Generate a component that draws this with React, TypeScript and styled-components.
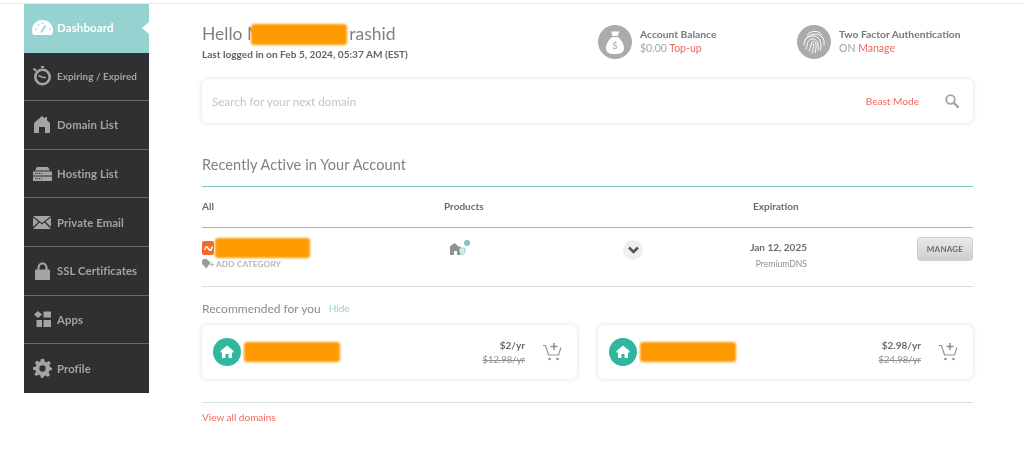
import * as React from "react";
import styled, { createGlobalStyle } from "styled-components";

const GlobalStyle = createGlobalStyle`
  html, body {
    margin: 0;
    padding: 0;
    background: #fff;
    font-family: "Lato", "Open Sans", sans-serif;
    color: #6f7072;
  }
`;

const Page = styled.div`
  width: 1024px;
  height: 451px;
  margin-top: 3px;
  box-sizing: border-box;
  overflow: hidden;
  border-top: 1px solid #ececec;
  display: flex;
  align-items: flex-start;
  padding-left: 24px;
  filter: blur(0.35px);
`;

const Sidebar = styled.nav`
  width: 125px;
  flex: none;
  display: flex;
  flex-direction: column;
`;

const NavItem = styled.div<{ $active?: boolean; $small?: boolean }>`
  height: 48.6px;
  box-sizing: border-box;
  display: flex;
  align-items: center;
  position: relative;
  background: ${(p) => (p.$active ? "#96d2cf" : "#2f3032")};
  border-bottom: 1px solid ${(p) => (p.$active ? "#96d2cf" : "#66686a")};
  color: ${(p) => (p.$active ? "#fff" : "#a3a4a5")};
  font-size: ${(p) => (p.$active ? "11.5px" : p.$small ? "9.8px" : "11.3px")};
  font-weight: 700;
  white-space: nowrap;
  letter-spacing: 0.1px;

  &:last-child {
    border-bottom: 0;
  }
`;

const NavIcon = styled.span`
  width: 33px;
  flex: none;
  display: flex;
  justify-content: center;
  padding-left: 3px;
  box-sizing: border-box;
`;

const NavNotch = styled.span`
  position: absolute;
  right: 0;
  top: 18px;
  width: 0;
  height: 0;
  border-top: 6px solid transparent;
  border-bottom: 6px solid transparent;
  border-right: 7px solid #fff;
`;

const Main = styled.main`
  width: 771px;
  margin-left: 53px;
  flex: none;
  display: flex;
  flex-direction: column;
`;

const TopRow = styled.header`
  height: 75px;
  display: flex;
  align-items: flex-start;
`;

const Greeting = styled.div`
  width: 396px;
  flex: none;
  padding-top: 19px;
`;

const Hello = styled.div`
  font-size: 17.5px;
  line-height: 22px;
  color: #808183;
  display: flex;
  align-items: center;
`;

const Redaction = styled.span<{ $w: number; $h: number }>`
  display: inline-block;
  flex: none;
  width: ${(p) => p.$w}px;
  height: ${(p) => p.$h}px;
  background: #ff9a00;
  border-radius: 3px;
  filter: blur(1px);
`;

const HelloMark = styled(Redaction)`
  margin: 0 2px 0 -12px;
`;

const DomainMark = styled(Redaction)`
  margin-left: 1px;
`;

const OfferMark = styled(Redaction)`
  margin-left: 3px;
`;

const LastLogged = styled.div`
  font-size: 10.1px;
  line-height: 12px;
  font-weight: 700;
  color: #636466;
  margin-top: 3px;
`;

const Stat = styled.div<{ $w: number }>`
  width: ${(p) => p.$w}px;
  flex: none;
  display: flex;
  align-items: center;
  gap: 8px;
  margin-top: 21px;
`;

const StatIcon = styled.span`
  width: 34px;
  height: 34px;
  flex: none;
  border-radius: 50%;
  background: #aaabad;
  display: flex;
  align-items: center;
  justify-content: center;
`;

const StatText = styled.div`
  padding-bottom: 2px;
`;

const StatTitle = styled.div`
  font-size: 10.3px;
  line-height: 14px;
  font-weight: 700;
  color: #77787a;
`;

const StatValue = styled.div`
  font-size: 10.5px;
  line-height: 14px;
  color: #a3a4a6;
`;

const Link = styled.span`
  color: #f0695c;
`;

const SearchCard = styled.div`
  height: 44px;
  box-sizing: border-box;
  border-radius: 6px;
  box-shadow: 0 0 5px rgba(0, 0, 0, 0.13);
  display: flex;
  align-items: center;
  padding: 0 14px 0 10px;
  font-size: 11.7px;
  color: #c2c3c5;
`;

const BeastMode = styled(Link)`
  margin-left: auto;
  margin-right: 26px;
  font-size: 10.1px;
`;

const SectionTitle = styled.h2`
  margin: 32px 0 0;
  font-size: 14.5px;
  line-height: 20px;
  font-weight: 400;
  color: #808183;
  letter-spacing: 0.1px;
`;

const TableHead = styled.div`
  margin-top: 11px;
  height: 42px;
  box-sizing: border-box;
  border-top: 1px solid #7fc5c1;
  border-bottom: 1px solid #7fc5c1;
  padding-bottom: 2px;
  display: flex;
  align-items: center;
  font-size: 10px;
  font-weight: 700;
  color: #6b6c6e;
`;

const HeadCell = styled.div<{ $w: number }>`
  width: ${(p) => p.$w}px;
  flex: none;
`;

const DomainRow = styled.div`
  height: 59px;
  box-sizing: border-box;
  border-bottom: 1px solid #dcdcdc;
  display: flex;
  align-items: flex-start;
`;

const DomainCell = styled.div`
  width: 242px;
  flex: none;
  padding-top: 10px;
`;

const DomainName = styled.div`
  display: flex;
  align-items: center;
  height: 20px;
`;

const Favicon = styled.span`
  width: 12px;
  height: 14px;
  flex: none;
  border-radius: 2px;
  background: #f26a2c;
  display: flex;
  align-items: center;
  justify-content: center;
`;

const AddCategory = styled.div`
  display: flex;
  align-items: center;
  gap: 2px;
  font-size: 8.3px;
  line-height: 12px;
  font-weight: 700;
  letter-spacing: 0.1px;
  color: #b4b5b6;
`;

const ProductCell = styled.div`
  width: 179px;
  box-sizing: border-box;
  flex: none;
  padding: 12px 0 0 5px;
`;

const Toggle = styled.span`
  width: 20px;
  height: 20px;
  flex: none;
  margin-top: 12px;
  border-radius: 50%;
  background: #efefef;
  display: flex;
  align-items: center;
  justify-content: center;
`;

const DateCell = styled.div`
  width: 164px;
  flex: none;
  text-align: right;
  padding-top: 12px;
`;

const DateText = styled.div`
  font-size: 10px;
  line-height: 14px;
  font-weight: 700;
  color: #6b6c6e;
`;

const PlanText = styled.div`
  font-size: 8.6px;
  line-height: 12px;
  margin-top: 4px;
  color: #8e8f91;
`;

const ManageButton = styled.button`
  margin: 9px 0 0 auto;
  width: 56px;
  height: 24px;
  padding: 0;
  border: 1px solid #d0d0d0;
  border-radius: 3px;
  background: linear-gradient(#e9e9e9, #cfcfcf);
  font-family: inherit;
  font-size: 8px;
  font-weight: 700;
  letter-spacing: 0.2px;
  color: #6b6c6e;
`;

const RecommendHead = styled.div`
  margin-top: 13px;
  height: 16px;
  display: flex;
  align-items: center;
  gap: 8px;
  font-size: 12px;
  color: #8a8b8d;
`;

const HideLink = styled.span`
  font-size: 10px;
  color: #96d2cf;
`;

const CardGrid = styled.div`
  margin-top: 9px;
  display: grid;
  grid-template-columns: 375px 375px;
  justify-content: space-between;
`;

const OfferCard = styled.div`
  height: 54px;
  box-sizing: border-box;
  border-radius: 6px;
  box-shadow: 0 0 5px rgba(0, 0, 0, 0.13);
  display: flex;
  align-items: center;
  padding: 0 15px 0 11px;
`;

const HomeBadge = styled.span`
  width: 28px;
  height: 28px;
  flex: none;
  border-radius: 50%;
  background: #30b79e;
  display: flex;
  align-items: center;
  justify-content: center;
`;

const Price = styled.div`
  margin-left: auto;
  margin-right: 18px;
  text-align: right;
`;

const NewPrice = styled.div`
  font-size: 10px;
  line-height: 14px;
  font-weight: 700;
  color: #6b6c6e;
`;

const OldPrice = styled.div`
  font-size: 9.5px;
  line-height: 14px;
  margin-top: 1px;
  color: #8e8f91;
  text-decoration: line-through;
`;

const Divider = styled.hr`
  margin: 23px 0 0;
  border: 0;
  border-top: 1px solid #dcdcdc;
`;

const ViewAll = styled(Link)`
  margin-top: 8px;
  font-size: 10px;
  line-height: 12px;
`;

const GaugeIcon = () => (
  <svg width="21" height="15" viewBox="0 0 21 15">
    <path fill="#fff" d="M10.5 0C4.7 0 0 4.6 0 10.4 0 12 .4 13.5 1.1 15h18.8c.7-1.5 1.1-3 1.1-4.6C21 4.6 16.3 0 10.5 0z" />
    <path fill="none" stroke="#96d2cf" strokeWidth="1.5" d="M9 12.5 13.5 5.5M3 9.5h1.5M17 9.5h1.5M6 4.5l1 1M10.5 2.5V4" />
  </svg>
);

const TimerIcon = () => (
  <svg width="20" height="20" viewBox="0 0 20 20">
    <path fill="none" stroke="#a3a4a5" strokeWidth="2.2" d="M1.5 2.5l3 2.5M9 1h3" />
    <circle cx="10.5" cy="11" r="7.2" fill="none" stroke="#a3a4a5" strokeWidth="2.6" />
    <path fill="none" stroke="#a3a4a5" strokeWidth="1.5" d="M6.5 9.5l4.5 2h3" />
  </svg>
);

const HouseIcon = () => (
  <svg width="16" height="17" viewBox="0 0 16 17">
    <path fill="#a3a4a5" d="M8 0l3 2.5V1h2v3.2L16 7v10h-5v-6H5v6H0V7z" />
  </svg>
);

const ServerIcon = () => (
  <svg width="19" height="14" viewBox="0 0 19 14">
    <path fill="#a3a4a5" d="M4 0h11l2 3.5H2zM0 4.5h19v4H0zM0 9.5h19V14H0z" />
    <path fill="none" stroke="#2f3032" strokeWidth="1" strokeDasharray="1 1" d="M2 6.500h7M2 11.700h7" />
  </svg>
);

const MailIcon = () => (
  <svg width="18" height="13" viewBox="0 0 18 13">
    <path fill="#a3a4a5" d="M0 0h18l-9 7zM0 1.5l5.5 4.3L0 11zM18 1.5l-5.5 4.3L18 11zM6.5 6.6 9 8.6l2.5-2L18 13H0z" />
  </svg>
);

const LockIcon = () => (
  <svg width="15" height="18" viewBox="0 0 15 18">
    <path fill="none" stroke="#a3a4a5" strokeWidth="2.2" d="M3.5 8V5.5a4 4 0 0 1 8 0V8" />
    <rect y="7.5" width="15" height="10.5" rx="1" fill="#a3a4a5" />
  </svg>
);

const AppsIcon = () => (
  <svg width="17" height="16" viewBox="0 0 17 16">
    <path fill="#a3a4a5" d="M4 0l4 3.5L4 7 0 3.5zM9.5.5H17v6H9.500zM2.500 9H8v7H2.500zM9.500 9H17v7H9.500z" />
  </svg>
);

const GearIcon = () => (
  <svg width="19" height="19" viewBox="0 0 24 24">
    <path
      fill="#a3a4a5"
      fillRule="evenodd"
      d="M10 0h4l.6 3.3 2.4 1L19.8 2.400l2.800 2.800-1.900 2.800 1 2.400L24 11v3l-3.300.6-1 2.400 1.900 2.800-2.800 2.800-2.800-1.900-2.400 1L13 24h-3l-.6-3.300-2.400-1-2.800 1.900-2.800-2.800L4 16.500l-1-2.400L0 13.500v-3l3.300-.6 1-2.400L2.400 4.700l2.800-2.800L8 3.800l1.400-.6zM12 8a4 4 0 1 0 0 8 4 4 0 0 0 0-8z"
    />
  </svg>
);

const MoneyBagIcon = () => (
  <svg width="18" height="23" viewBox="0 0 18 23">
    <path fill="#fff" d="M5 0c1.5 1 2.5 1 4 .3C10.5 1 12 1 13.5 0l-2 5h-5zM6 6h6c3 2.5 6 7 6 11 0 4-2.5 6-9 6s-9-2-9-6c0-4 3-8.500 6-11z" />
    <text x="9" y="18" textAnchor="middle" fontSize="10" fontFamily="Lato, sans-serif" fill="#aaabad">$</text>
  </svg>
);

const FingerprintIcon = () => (
  <svg width="24" height="26" viewBox="0 0 24 26">
    <g fill="none" stroke="#fff" strokeWidth="1" strokeLinecap="round">
      <path d="M5 6c5-5 11-5 15 0" />
      <path d="M3 11c3-6 12-8 17-3 2 2 2.5 5 2 8" />
      <path d="M2 16c0-6 4-9 9-9s8 4 8 9c0 2 0 3-.5 5" />
      <path d="M4 20c1-2 1-4 1.500-6 1-4 5-5 8-3 3 2 3 6 2.500 10" />
      <path d="M7 22c1.500-2 1.500-5 2.500-8 1-2.500 4-2 4.500 1 .4 3-.2 6-1 9" />
      <path d="M10 24c1-3 1.500-5 1.500-9" />
    </g>
  </svg>
);

const SearchIcon = () => (
  <svg width="14" height="14" viewBox="0 0 14 14">
    <circle cx="5.5" cy="5.5" r="4.3" fill="none" stroke="#a3a4a6" strokeWidth="1.8" />
    <path stroke="#a3a4a6" strokeWidth="2.4" strokeLinecap="round" d="M9 9l3.800 3.800" />
  </svg>
);

const NamecheapMark = () => (
  <svg width="9" height="7" viewBox="0 0 9 7">
    <path fill="none" stroke="#fff" strokeWidth="1.5" d="M.7 5C1.5 2 2.5 1 3.5 2.5l2 2.500c1 1 2 0 2.800-3.500" />
  </svg>
);

const TagIcon = () => (
  <svg width="12" height="10" viewBox="0 0 12 10">
    <path fill="#9a9b9d" d="M0 1.5 1.5 0h3L8.500 3.500 4.500 9.500 0 5z" />
    <path stroke="#b4b5b6" strokeWidth="1" d="M8 5.500h4M10 3.500v4" />
  </svg>
);

const ProductIcon = () => (
  <svg width="22" height="16" viewBox="0 0 22 16">
    <path fill="#8f9092" d="M5.5 3 9 6v.5h2.500V15H8v-4H5v4H1V6.500z" />
    <path fill="#d8eceb" stroke="#7fc5c1" strokeWidth="0.8" d="M10.500 8H16v3c0 2-1.300 3.500-2.700 4-1.500-.5-2.800-2-2.800-4z" />
    <circle cx="18" cy="3" r="3" fill="#7fc5c1" />
  </svg>
);

const ChevronIcon = () => (
  <svg width="11" height="8" viewBox="0 0 11 8">
    <path fill="none" stroke="#55565a" strokeWidth="2.6" d="M1 1.500l4.500 4.500L10 1.500" />
  </svg>
);

const HomeGlyph = () => (
  <svg width="14" height="14" viewBox="0 0 14 14">
    <path fill="#fff" d="M7 .5L13.500 6v1.500H12V13H8.500V9h-3v4H2V7.500H.5V6z" />
  </svg>
);

const CartIcon = () => (
  <svg width="19" height="19" viewBox="0 0 19 19">
    <path fill="none" stroke="#8e8f91" strokeWidth="1.1" d="M0 2.500h2.500l3 9.500h10L18 4.500" />
    <path fill="none" stroke="#8e8f91" strokeWidth="1.5" d="M11 0v7M7.500 3.500h7" />
    <circle cx="6.5" cy="16" r="1.3" fill="#8e8f91" />
    <circle cx="14.5" cy="16" r="1.3" fill="#8e8f91" />
  </svg>
);

const navItems = [
  { label: "Dashboard", icon: <GaugeIcon />, active: true },
  { label: "Expiring / Expired", icon: <TimerIcon />, small: true },
  { label: "Domain List", icon: <HouseIcon /> },
  { label: "Hosting List", icon: <ServerIcon /> },
  { label: "Private Email", icon: <MailIcon /> },
  { label: "SSL Certificates", icon: <LockIcon /> },
  { label: "Apps", icon: <AppsIcon /> },
  { label: "Profile", icon: <GearIcon /> },
];

const offers = [
  { price: "$2/yr", old: "$12.98/yr" },
  { price: "$2.98/yr", old: "$24.98/yr" },
];

export default function App() {
  return (
    <>
      <GlobalStyle />
      <Page>
        <Sidebar>
          {navItems.map((item) => (
            <NavItem key={item.label} $active={item.active} $small={item.small}>
              <NavIcon>{item.icon}</NavIcon>
              {item.label}
              {item.active && <NavNotch />}
            </NavItem>
          ))}
        </Sidebar>
        <Main>
          <TopRow>
            <Greeting>
              <Hello>
                Hello M
                <HelloMark $w={96} $h={21} />
                rashid
              </Hello>
              <LastLogged>Last logged in on Feb 5, 2024, 05:37 AM (EST)</LastLogged>
            </Greeting>
            <Stat $w={199}>
              <StatIcon>
                <MoneyBagIcon />
              </StatIcon>
              <StatText>
                <StatTitle>Account Balance</StatTitle>
                <StatValue>
                  $0.00 <Link>Top-up</Link>
                </StatValue>
              </StatText>
            </Stat>
            <Stat $w={176}>
              <StatIcon>
                <FingerprintIcon />
              </StatIcon>
              <StatText>
                <StatTitle>Two Factor Authentication</StatTitle>
                <StatValue>
                  ON <Link>Manage</Link>
                </StatValue>
              </StatText>
            </Stat>
          </TopRow>

          <SearchCard>
            Search for your next domain
            <BeastMode>Beast Mode</BeastMode>
            <SearchIcon />
          </SearchCard>

          <SectionTitle>Recently Active in Your Account</SectionTitle>
          <TableHead>
            <HeadCell $w={242}>All</HeadCell>
            <HeadCell $w={309}>Products</HeadCell>
            <HeadCell $w={60}>Expiration</HeadCell>
          </TableHead>
          <DomainRow>
            <DomainCell>
              <DomainName>
                <Favicon>
                  <NamecheapMark />
                </Favicon>
                <DomainMark $w={95} $h={20} />
              </DomainName>
              <AddCategory>
                <TagIcon />
                ADD CATEGORY
              </AddCategory>
            </DomainCell>
            <ProductCell>
              <ProductIcon />
            </ProductCell>
            <Toggle>
              <ChevronIcon />
            </Toggle>
            <DateCell>
              <DateText>Jan 12, 2025</DateText>
              <PlanText>PremiumDNS</PlanText>
            </DateCell>
            <ManageButton>MANAGE</ManageButton>
          </DomainRow>

          <RecommendHead>
            Recommended for you
            <HideLink>Hide</HideLink>
          </RecommendHead>
          <CardGrid>
            {offers.map((offer) => (
              <OfferCard key={offer.old}>
                <HomeBadge>
                  <HomeGlyph />
                </HomeBadge>
                <OfferMark $w={96} $h={20} />
                <Price>
                  <NewPrice>{offer.price}</NewPrice>
                  <OldPrice>{offer.old}</OldPrice>
                </Price>
                <CartIcon />
              </OfferCard>
            ))}
          </CardGrid>
          <Divider />
          <ViewAll>View all domains</ViewAll>
        </Main>
      </Page>
    </>
  );
}
